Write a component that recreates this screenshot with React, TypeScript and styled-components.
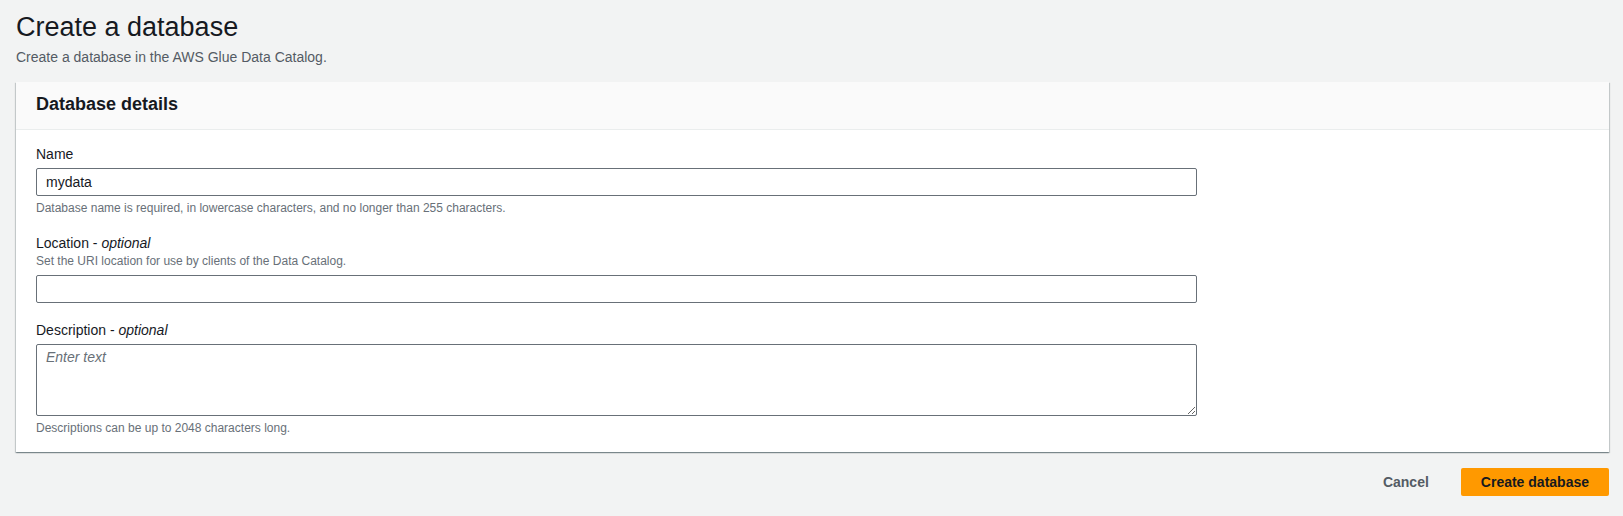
import React from 'react';
import styled, { createGlobalStyle } from 'styled-components';

const GlobalStyle = createGlobalStyle`
  html, body {
    margin: 0;
    padding: 0;
    background: #f2f3f3;
  }
  body {
    font-family: "Liberation Sans", Arial, sans-serif;
    color: #16191f;
  }
`;

const Page = styled.div`
  padding: 10px 14px 8px 16px;
`;

const Title = styled.h1`
  margin: 0;
  font-size: 27px;
  line-height: 34px;
  font-weight: 400;
  color: #16191f;
`;

const Subtitle = styled.p`
  margin: 3px 0 15px;
  font-size: 14px;
  line-height: 20px;
  color: #545b64;
`;

const Card = styled.section`
  background: #fff;
  box-shadow: 0 1px 1px 0 rgba(0, 28, 36, 0.3), 1px 1px 1px 0 rgba(0, 28, 36, 0.15),
    -1px 1px 1px 0 rgba(0, 28, 36, 0.15);
`;

const CardHeader = styled.header`
  background: #fafafa;
  border-bottom: 1px solid #eaeded;
  padding: 11px 20px 14px;

  h2 {
    margin: 0;
    font-size: 18px;
    line-height: 22px;
    font-weight: 700;
  }
`;

const CardBody = styled.div`
  padding: 14px 20px 16px;
  display: flex;
  flex-direction: column;
  gap: 17px;
`;

const Field = styled.div`
  display: flex;
  flex-direction: column;
  max-width: 1161px;
`;

const Label = styled.label`
  font-size: 14px;
  line-height: 20px;
  color: #16191f;

  em {
    font-style: italic;
  }
`;

const Hint = styled.div<{ $after?: boolean }>`
  font-size: 12px;
  line-height: 16px;
  color: #687078;
  margin-top: ${p => (p.$after ? '4px' : '0')};
`;

const Input = styled.input<{ $gap?: number }>`
  box-sizing: border-box;
  height: 28px;
  margin-top: ${p => p.$gap ?? 4}px;
  padding: 0 9px;
  border: 1px solid #687078;
  border-radius: 2px;
  font-family: inherit;
  font-size: 14px;
  color: #16191f;
  background: #fff;
  outline: none;
`;

const TextArea = styled.textarea`
  box-sizing: border-box;
  height: 72px;
  margin-top: 4px;
  padding: 2px 9px;
  border: 1px solid #687078;
  border-radius: 2px;
  font-family: inherit;
  font-size: 14px;
  line-height: 20px;
  color: #16191f;
  resize: vertical;
  outline: none;

  &::placeholder {
    color: #687078;
    font-style: italic;
  }
`;

const Actions = styled.div`
  display: flex;
  justify-content: flex-end;
  align-items: center;
  gap: 12px;
  margin-top: 16px;
`;

const Button = styled.button<{ $primary?: boolean }>`
  height: 28px;
  padding: 0 20px;
  border: none;
  border-radius: 2px;
  font-family: inherit;
  font-size: 14px;
  font-weight: 700;
  cursor: pointer;
  background: ${p => (p.$primary ? '#ff9900' : 'transparent')};
  color: ${p => (p.$primary ? '#16191f' : '#545b64')};
`;

export default function App() {
  return (
    <Page>
      <GlobalStyle />
      <Title>Create a database</Title>
      <Subtitle>Create a database in the AWS Glue Data Catalog.</Subtitle>
      <Card>
        <CardHeader>
          <h2>Database details</h2>
        </CardHeader>
        <CardBody>
          <Field>
            <Label>Name</Label>
            <Input defaultValue="mydata" />
            <Hint $after>Database name is required, in lowercase characters, and no longer than 255 characters.</Hint>
          </Field>
          <Field>
            <Label>
              Location - <em>optional</em>
            </Label>
            <Hint>Set the URI location for use by clients of the Data Catalog.</Hint>
            <Input $gap={6} />
          </Field>
          <Field>
            <Label>
              Description - <em>optional</em>
            </Label>
            <TextArea placeholder="Enter text" />
            <Hint $after>Descriptions can be up to 2048 characters long.</Hint>
          </Field>
        </CardBody>
      </Card>
      <Actions>
        <Button>Cancel</Button>
        <Button $primary>Create database</Button>
      </Actions>
    </Page>
  );
}
